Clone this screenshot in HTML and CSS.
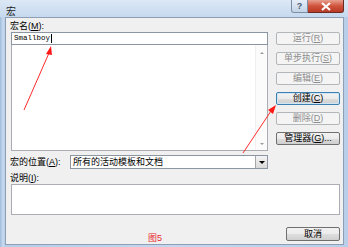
FILE: index.html
```html
<!DOCTYPE html>
<html>
  <head>
    <link rel="stylesheet" href="styles.css">
    <meta charset="utf-8" />
    <title>宏</title>
  </head>
  <body>
    <div class="window">
      <div class="titlebar">
        <span class="title">宏</span>
        <div class="caption">
          <span class="help">?</span>
          <span class="close">
            <svg width="12" height="9" viewBox="0 0 12 9">
              <path d="M2 1 L10 8 M10 1 L2 8" stroke="#fff" stroke-width="2.2" />
            </svg>
          </span>
        </div>
      </div>
      <div class="client">
        <div class="top">
          <div class="left">
            <div class="label">宏名(<u>M</u>):</div>
            <div class="name-input">Smallboy<span class="caret"></span></div>
            <div class="list">
              <div class="scroll">
                <span class="arrow-up"></span>
                <span class="arrow-down"></span>
              </div>
            </div>
            <div class="loc-row">
              <span class="label loc-label">宏的位置(<u>A</u>):</span>
              <div class="combo">
                <span class="combo-text">所有的活动模板和文档</span>
                <span class="drop"><span class="drop-tri"></span></span>
              </div>
            </div>
          </div>
          <div class="buttons">
            <div class="btn disabled">运行(<u>R</u>)</div>
            <div class="btn disabled">单步执行(<u>S</u>)</div>
            <div class="btn disabled">编辑(<u>E</u>)</div>
            <div class="btn focused">创建(<u>C</u>)</div>
            <div class="btn disabled">删除(<u>D</u>)</div>
            <div class="btn">管理器(<u>G</u>)...</div>
          </div>
        </div>
        <div class="label desc-label">说明(<u>I</u>):</div>
        <div class="desc"></div>
        <div class="bottom">
          <span class="fig">图5</span>
          <div class="btn cancel">取消</div>
        </div>
      </div>
      <svg class="arrows" width="348" height="247" viewBox="0 0 348 247">
        <line x1="24" y1="110" x2="49" y2="53" stroke="#ff2a2a" stroke-width="1" />
        <polygon points="51,46 46,54 52,55" fill="#ff1a1a" />
        <line x1="243" y1="153" x2="271" y2="111" stroke="#ff2a2a" stroke-width="1" />
        <polygon points="276,105 268,110 273,114" fill="#ff1a1a" />
      </svg>
    </div>
  </body>
</html>
```

FILE: styles.css
```css
body {
  margin: 0;
  font-family: "Liberation Sans", "Noto Sans CJK SC", sans-serif;
  font-size: 9px;
  color: #000;
}

.window {
  position: relative;
  width: 348px;
  height: 247px;
  box-sizing: border-box;
  padding: 0 4px 3px 5px;
  display: flex;
  flex-direction: column;
  background: linear-gradient(to right, #9fbbdc 0px, #c9dbef 3px, #b7cde8 5px, #c4d7ee 50%, #b9cfe9 100%);
}

.titlebar {
  height: 19px;
  display: flex;
  align-items: flex-start;
  background: linear-gradient(#dce8f5, #c6d9ee);
  margin: 0 -4px 0 -5px;
  padding: 0 4px 0 6px;
}

.title {
  font-size: 10px;
  line-height: 10px;
  margin-top: 7px;
  color: #1e1e1e;
}

.caption {
  margin-left: auto;
  display: flex;
}

.help {
  width: 15px;
  height: 12px;
  border: 1px solid #7d8fa6;
  border-top: none;
  border-radius: 0 0 0 3px;
  background: linear-gradient(#e6eef8, #c3d3e6);
  color: #4a5a70;
  font-size: 9px;
  line-height: 12px;
  text-align: center;
  font-weight: bold;
}

.close {
  width: 35px;
  height: 12px;
  border: 1px solid #6b2a22;
  border-top: none;
  border-left: none;
  border-radius: 0 0 3px 0;
  background: linear-gradient(#e8a08f, #d0533c 50%, #b93a25);
  display: flex;
  align-items: center;
  justify-content: center;
}

.client {
  flex: 1;
  background: #f0f0f0;
  border: 1px solid #8e9fb5;
  padding: 3px 3px 0 5px;
  display: flex;
  flex-direction: column;
}

.top {
  display: flex;
  gap: 8px;
}

.left {
  width: 257px;
  display: flex;
  flex-direction: column;
}

.label {
  height: 11px;
  line-height: 11px;
  margin-left: -1px;
}

.name-input {
  height: 13px;
  box-sizing: border-box;
  border: 1px solid #8c96a3;
  background: #fff;
  font-family: "Liberation Mono", monospace;
  font-size: 7.5px;
  line-height: 11px;
  padding-left: 2px;
  display: flex;
  align-items: center;
}

.caret {
  width: 1px;
  height: 9px;
  background: #000;
  margin-left: 1px;
}

.list {
  height: 106px;
  box-sizing: border-box;
  border: 1px solid #abadb3;
  border-top: none;
  background: #fff;
  display: flex;
  justify-content: flex-end;
}

.scroll {
  width: 11px;
  display: flex;
  flex-direction: column;
  justify-content: space-between;
  align-items: center;
  padding: 7px 0 5px;
  background: #fbfbfb;
  border-left: 1px solid #f0f0f0;
}

.arrow-up {
  border: 2px solid transparent;
  border-bottom: 2px solid #9a9a9a;
  border-top: none;
}

.arrow-down {
  border: 2px solid transparent;
  border-top: 2px solid #9a9a9a;
  border-bottom: none;
}

.loc-row {
  margin-top: 4px;
  display: flex;
  align-items: center;
}

.loc-label {
  width: 60px;
  height: 14px;
  line-height: 14px;
}

.combo {
  flex: 1;
  height: 14px;
  box-sizing: border-box;
  border: 1px solid #8c96a3;
  background: #fff;
  display: flex;
}

.combo-text {
  flex: 1;
  line-height: 12px;
  padding-left: 2px;
}

.drop {
  width: 11px;
  background: linear-gradient(#f4f4f4, #d9d9d9);
  border-left: 1px solid #a6a6a6;
  display: flex;
  align-items: center;
  justify-content: center;
}

.drop-tri {
  border: 3px solid transparent;
  border-top: 3px solid #000;
  border-bottom: none;
}

.buttons {
  width: 64px;
  margin-top: 11px;
  display: flex;
  flex-direction: column;
  gap: 7px;
}

.btn {
  height: 13px;
  box-sizing: border-box;
  border: 1px solid #707070;
  border-radius: 2px;
  background: linear-gradient(#f2f2f2, #ebebeb 50%, #dddddd 51%, #cfcfcf);
  text-align: center;
  line-height: 11px;
  font-size: 9px;
  color: #000;
}

.btn.disabled {
  border-color: #b3b7ba;
  background: #f4f4f4;
  color: #8d8d8d;
}

.btn.focused {
  border-color: #3c7fb1;
  box-shadow: inset 0 0 0 1px #cfe6f7;
}

.desc-label {
  margin-top: 3px;
  height: 12px;
  line-height: 12px;
}

.desc {
  height: 31px;
  box-sizing: border-box;
  border: 1px solid #abadb3;
  background: #fff;
}

.bottom {
  margin-top: 8px;
  display: flex;
  align-items: center;
}

.fig {
  margin-left: 137px;
  margin-top: 8px;
  color: #e8282d;
  font-size: 9px;
}

.btn.cancel {
  margin-left: auto;
  width: 54px;
  height: 14px;
  line-height: 12px;
}

.arrows {
  position: absolute;
  left: 0;
  top: 0;
  pointer-events: none;
}
```
